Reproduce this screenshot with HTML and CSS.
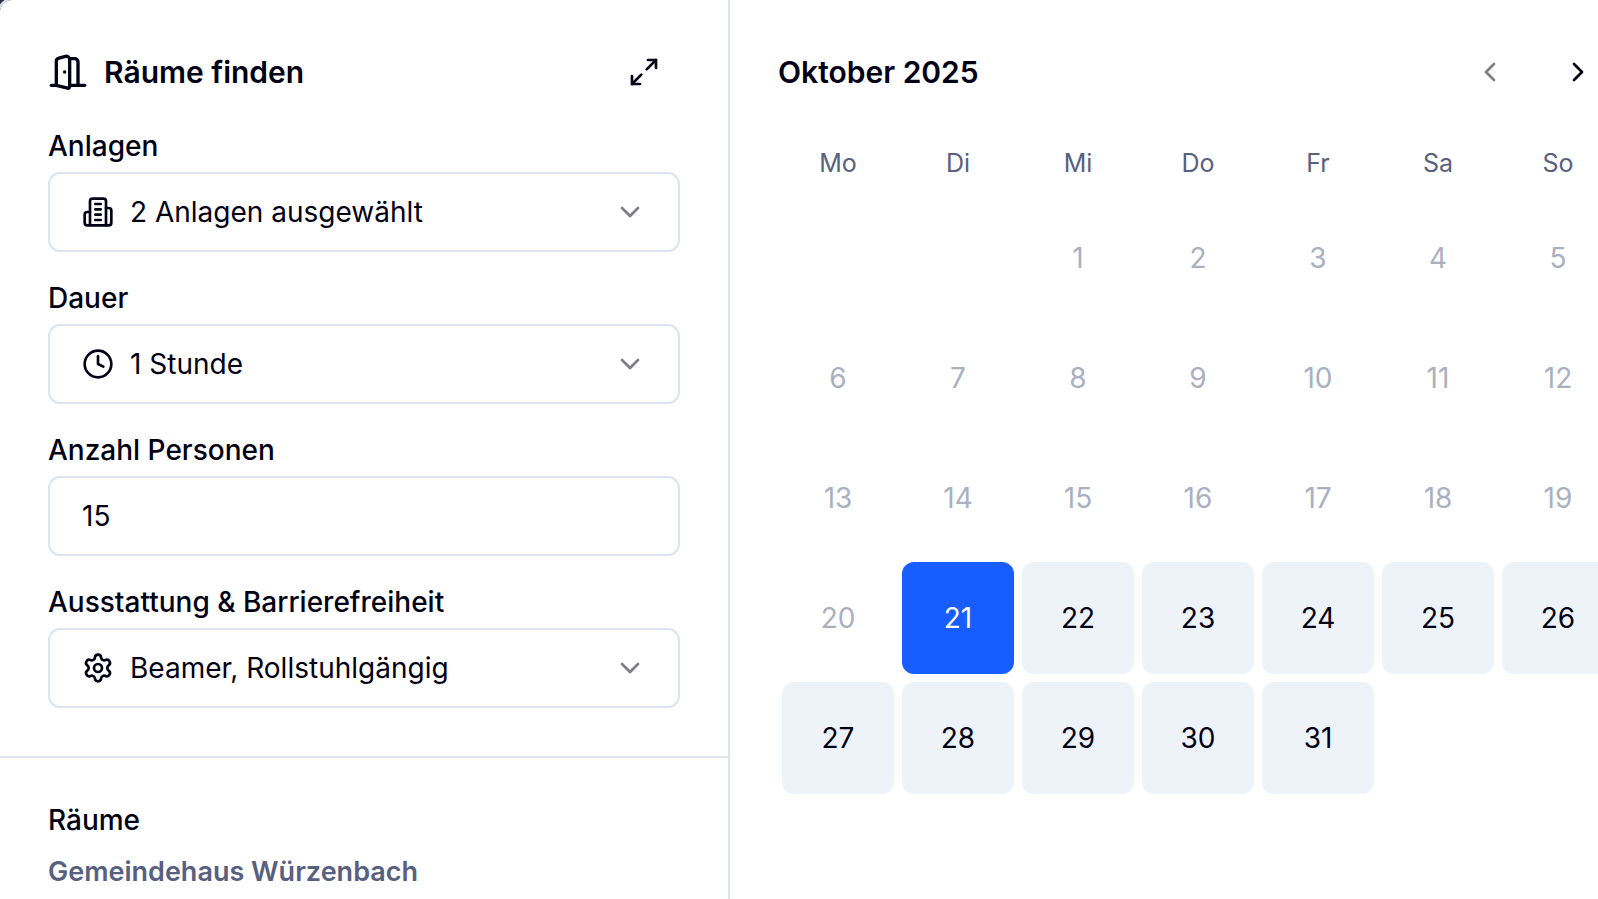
FILE: index.html
```html
<!DOCTYPE html>
<html lang="de">
<head>
<meta charset="utf-8">
<title>Räume finden</title>
<link rel="stylesheet" href="styles.css">
</head>
<body>
<main class="dialog">
  <aside class="sidebar">
    <section class="filters">
      <header class="filters-head">
        <svg class="icon icon-door" viewBox="0 0 24 24" aria-hidden="true"><path d="M11 20H2"/><path d="M11 4.562v16.157a1 1 0 0 0 1.242.97L19 20V5.562a2 2 0 0 0-1.515-1.94l-4-1A2 2 0 0 0 11 4.561z"/><path d="M11 4H8a2 2 0 0 0-2 2v14"/><path d="M14 12h.01"/><path d="M22 20h-3"/></svg>
        <h1 class="title">Räume finden</h1>
        <button class="expand" type="button" aria-label="Vergrössern">
          <svg class="icon" viewBox="0 0 24 24" aria-hidden="true"><path d="M15 3h6v6"/><path d="m21 3-7 7"/><path d="m3 21 7-7"/><path d="M9 21H3v-6"/></svg>
        </button>
      </header>
      <form class="form">
        <div class="field">
          <label class="label" for="anlagen">Anlagen</label>
          <div class="picker">
            <select class="control control-select" id="anlagen"><option>2 Anlagen ausgewählt</option></select>
            <svg class="icon picker-icon" viewBox="0 0 24 24" aria-hidden="true"><path d="M6 22V4a2 2 0 0 1 2-2h8a2 2 0 0 1 2 2v18Z"/><path d="M6 12H4a2 2 0 0 0-2 2v6a2 2 0 0 0 2 2h2"/><path d="M18 9h2a2 2 0 0 1 2 2v9a2 2 0 0 1-2 2h-2"/><path d="M10 6h4"/><path d="M10 10h4"/><path d="M10 14h4"/><path d="M10 18h4"/></svg>
            <svg class="icon picker-chevron" viewBox="0 0 24 24" aria-hidden="true"><path d="m6 9 6 6 6-6"/></svg>
          </div>
        </div>
        <div class="field">
          <label class="label" for="dauer">Dauer</label>
          <div class="picker">
            <select class="control control-select" id="dauer"><option>1 Stunde</option></select>
            <svg class="icon picker-icon" viewBox="0 0 24 24" aria-hidden="true"><circle cx="12" cy="12" r="10"/><path d="M12 6v6l4 2"/></svg>
            <svg class="icon picker-chevron" viewBox="0 0 24 24" aria-hidden="true"><path d="m6 9 6 6 6-6"/></svg>
          </div>
        </div>
        <div class="field">
          <label class="label" for="personen">Anzahl Personen</label>
          <input class="control" id="personen" type="text" inputmode="numeric" value="15">
        </div>
        <div class="field">
          <label class="label" for="ausstattung">Ausstattung &amp; Barrierefreiheit</label>
          <div class="picker">
            <select class="control control-select" id="ausstattung"><option>Beamer, Rollstuhlgängig</option></select>
            <svg class="icon picker-icon" viewBox="0 0 24 24" aria-hidden="true"><path d="M9.671 4.136a2.34 2.34 0 0 1 4.659 0 2.34 2.34 0 0 0 3.319 1.915 2.34 2.34 0 0 1 2.33 4.033 2.34 2.34 0 0 0 0 3.831 2.34 2.34 0 0 1-2.33 4.033 2.34 2.34 0 0 0-3.319 1.915 2.34 2.34 0 0 1-4.659 0 2.34 2.34 0 0 0-3.32-1.915 2.34 2.34 0 0 1-2.33-4.033 2.34 2.34 0 0 0 0-3.831A2.34 2.34 0 0 1 6.35 6.051a2.34 2.34 0 0 0 3.319-1.915"/><circle cx="12" cy="12" r="3"/></svg>
            <svg class="icon picker-chevron" viewBox="0 0 24 24" aria-hidden="true"><path d="m6 9 6 6 6-6"/></svg>
          </div>
        </div>
      </form>
    </section>
    <section class="rooms">
      <h2 class="rooms-title">Räume</h2>
      <h3 class="rooms-group">Gemeindehaus Würzenbach</h3>
    </section>
  </aside>
  <section class="calendar">
    <header class="calendar-head">
      <h2 class="title">Oktober 2025</h2>
      <nav class="calendar-nav">
        <button class="nav-button" type="button" disabled aria-label="Vorheriger Monat"><svg class="icon" viewBox="0 0 24 24" aria-hidden="true"><path d="m15 18-6-6 6-6"/></svg></button>
        <button class="nav-button" type="button" aria-label="Nächster Monat"><svg class="icon" viewBox="0 0 24 24" aria-hidden="true"><path d="m9 18 6-6-6-6"/></svg></button>
      </nav>
    </header>
    <table class="month">
      <thead>
        <tr><th>Mo</th><th>Di</th><th>Mi</th><th>Do</th><th>Fr</th><th>Sa</th><th>So</th></tr>
      </thead>
      <tbody>
        <tr><td></td><td></td><td><button class="day" disabled>1</button></td><td><button class="day" disabled>2</button></td><td><button class="day" disabled>3</button></td><td><button class="day" disabled>4</button></td><td><button class="day" disabled>5</button></td></tr>
        <tr><td><button class="day" disabled>6</button></td><td><button class="day" disabled>7</button></td><td><button class="day" disabled>8</button></td><td><button class="day" disabled>9</button></td><td><button class="day" disabled>10</button></td><td><button class="day" disabled>11</button></td><td><button class="day" disabled>12</button></td></tr>
        <tr><td><button class="day" disabled>13</button></td><td><button class="day" disabled>14</button></td><td><button class="day" disabled>15</button></td><td><button class="day" disabled>16</button></td><td><button class="day" disabled>17</button></td><td><button class="day" disabled>18</button></td><td><button class="day" disabled>19</button></td></tr>
        <tr><td><button class="day" disabled>20</button></td><td><button class="day day-selected">21</button></td><td><button class="day">22</button></td><td><button class="day">23</button></td><td><button class="day">24</button></td><td><button class="day">25</button></td><td><button class="day">26</button></td></tr>
        <tr><td><button class="day">27</button></td><td><button class="day">28</button></td><td><button class="day">29</button></td><td><button class="day">30</button></td><td><button class="day">31</button></td><td></td><td></td></tr>
      </tbody>
    </table>
  </section>
</main>
</body>
</html>
```

FILE: styles.css
```css
:root {
  --ink: #020014;
  --muted: #586080;
  --line: #dfe3f0;
  --cell: #eef3fa;
  --primary: #175dff;
}

* { box-sizing: border-box; }

body {
  margin: 0;
  overflow: hidden;
  background: #2e2e42;
  color: var(--ink);
  font-family: Inter, "Liberation Sans", sans-serif;
  font-size: 28px;
  line-height: 28px;
}

h1, h2, h3 { margin: 0; font-size: inherit; font-weight: 600; }

button, input, select { font: inherit; color: inherit; }

button { border: 0; padding: 0; background: none; }

.dialog {
  display: flex;
  min-height: 100vh;
  border-top-left-radius: 12px;
  outline: 2px solid var(--line);
  background: #fff;
}

.icon {
  display: block;
  width: 32px;
  height: 32px;
  fill: none;
  stroke: currentColor;
  stroke-width: 2;
  stroke-linecap: round;
  stroke-linejoin: round;
}

.title { font-size: 30px; line-height: 40px; }

.sidebar {
  flex: 0 0 730px;
  border-right: 2px solid var(--line);
}

.filters {
  padding: 36px 48px 48px;
  border-bottom: 2px solid var(--line);
}

.filters-head {
  display: flex;
  align-items: center;
  gap: 16px;
  margin-bottom: 24px;
}

.icon-door { width: 40px; height: 40px; transform: scaleX(-1); }

.expand {
  display: grid;
  place-items: center;
  width: 72px;
  height: 72px;
  margin-left: auto;
}

.form { display: grid; gap: 32px; }

.field { display: grid; gap: 12px; }

.label { font-weight: 500; }

.control {
  width: 100%;
  height: 80px;
  padding: 0 32px;
  border: 2px solid var(--line);
  border-radius: 12px;
  background: #fff;
  line-height: 40px;
  outline: 0;
}

.control-select { padding-left: 80px; appearance: none; }

.picker { display: grid; align-items: center; }

.picker > * { grid-area: 1 / 1; }

.picker-icon { margin-left: 34px; pointer-events: none; }

.picker-chevron {
  margin-right: 34px;
  justify-self: end;
  opacity: 0.5;
  pointer-events: none;
}

.rooms { display: grid; gap: 24px; padding: 48px; }

.rooms-title { font-weight: 500; }

.rooms-group { color: var(--muted); font-size: 27px; }

.calendar { flex: none; padding: 32px 48px; }

.calendar-head {
  display: flex;
  align-items: center;
  justify-content: space-between;
  margin-bottom: 16px;
}

.calendar-nav { display: flex; gap: 8px; }

.nav-button {
  display: grid;
  place-items: center;
  width: 80px;
  height: 80px;
}

.nav-button:disabled { opacity: 0.5; }

.month { border-collapse: collapse; }

.month th {
  height: 70px;
  padding: 0;
  color: var(--muted);
  font-size: 25px;
  font-weight: 400;
}

.month td { padding: 4px; }

.day {
  display: block;
  width: 112px;
  height: 112px;
  border-radius: 12px;
  background: var(--cell);
}

.day:disabled { background: none; color: #abb0c0; }

.day-selected { background: var(--primary); color: #f8fafc; }
```
